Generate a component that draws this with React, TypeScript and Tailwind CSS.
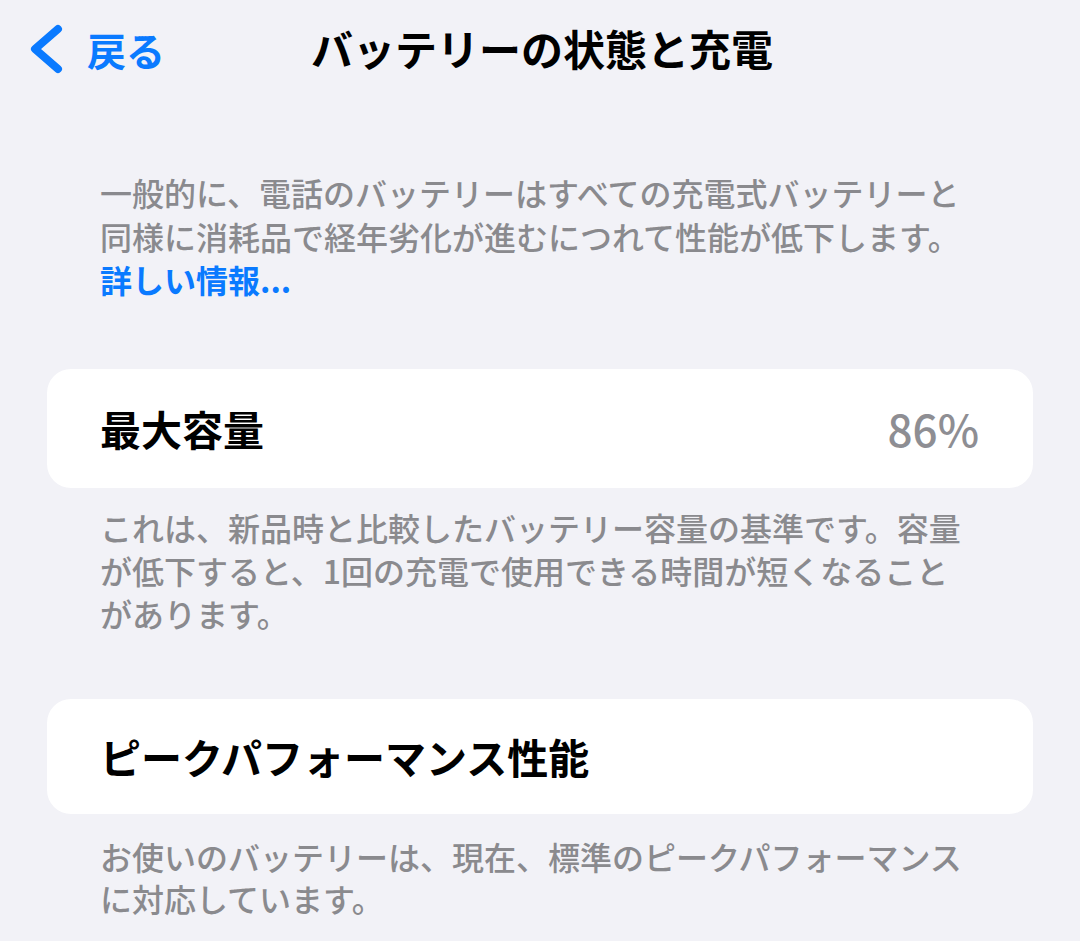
const font = { fontFamily: '"Noto Sans CJK JP", "Noto Sans", sans-serif' };

const App = () => {
    return (
        <div className="w-[1080px] h-[941px] bg-[#f2f2f7] overflow-hidden" style={font}>
            {/* Nav bar */}
            <div className="relative h-[96px] flex items-center">
                <div className="flex items-center pl-[27px] pt-[2px] text-[#0a7aff]">
                    <svg width="38" height="50" viewBox="0 0 38 50">
                        <polyline points="31,5 8,25 31,45" fill="none" stroke="currentColor" strokeWidth="8" strokeLinecap="round" strokeLinejoin="round" />
                    </svg>
                    <span className="ml-[22px] text-[39px] leading-none font-semibold">戻る</span>
                </div>
                <div className="absolute left-0 right-0 top-0 h-[96px] flex items-center justify-center pointer-events-none">
                    <span className="text-[42px] leading-none font-bold text-black ml-[4px]">バッテリーの状態と充電</span>
                </div>
            </div>

            {/* Intro */}
            <p className="mt-[75px] px-[100px] text-[32px] leading-[43.5px] font-medium text-[#8a8a8e] whitespace-nowrap">
                一般的に、電話のバッテリーはすべての充電式バッテリーと<br />
                同様に消耗品で経年劣化が進むにつれて性能が低下します。<br />
                <span className="text-[#0a7aff] font-bold">詳しい情報...</span>
            </p>

            {/* Max capacity */}
            <div className="mt-[67px] mx-[47px] h-[119px] bg-white rounded-[24px] flex items-center justify-between pl-[53px] pr-[54px]">
                <span className="text-[41px] leading-none font-bold text-black">最大容量</span>
                <span className="text-[44px] leading-none font-medium text-[#8e8e93]">86%</span>
            </div>
            <p className="mt-[18px] px-[100px] text-[32px] leading-[43px] font-medium text-[#8a8a8e] whitespace-nowrap">
                これは、新品時と比較したバッテリー容量の基準です。容量<br />
                が低下すると、1回の充電で使用できる時間が短くなること<br />
                があります。
            </p>

            {/* Peak performance */}
            <div className="mt-[64px] mx-[47px] h-[115px] bg-white rounded-[24px] flex items-center pl-[53px]">
                <span className="text-[41px] leading-none font-bold text-black">ピークパフォーマンス性能</span>
            </div>
            <p className="mt-[21px] px-[100px] text-[32px] leading-[42px] font-medium text-[#8a8a8e] whitespace-nowrap">
                お使いのバッテリーは、現在、標準のピークパフォーマンス<br />
                に対応しています。
            </p>
        </div>
    );
};

export default App;
